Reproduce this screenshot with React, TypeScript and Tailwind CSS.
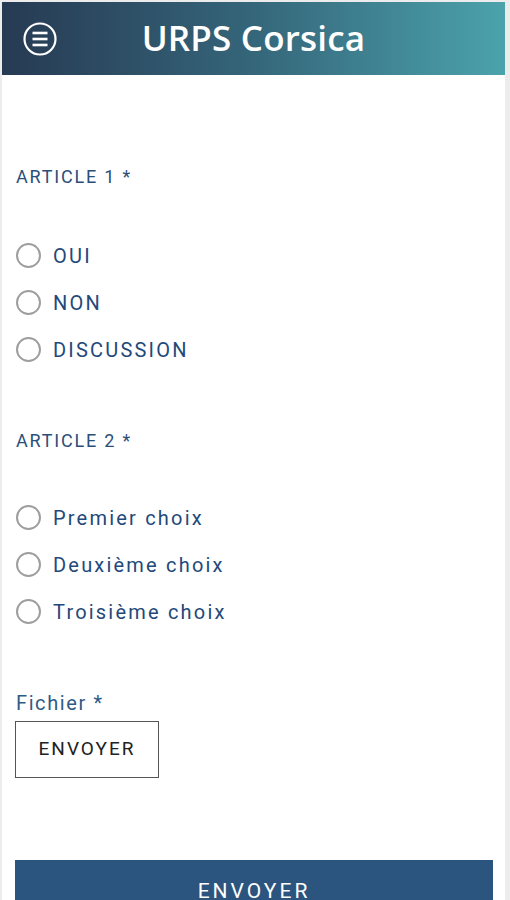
import React, { useState } from 'react';

const articles = [
  { title: 'ARTICLE 1 *', options: ['OUI', 'NON', 'DISCUSSION'], top: 'mt-[89px]', gap: 'mt-[44px]' },
  { title: 'ARTICLE 2 *', options: ['Premier choix', 'Deuxième choix', 'Troisième choix'], top: 'mt-[55px]', gap: 'mt-[42px]' },
];

const MenuIcon = () => (
  <svg width="34" height="34" viewBox="0 0 34 34" fill="none">
    <circle cx="17" cy="17" r="15.5" stroke="white" strokeWidth="2.2" />
    <line x1="9.5" y1="11" x2="24.5" y2="11" stroke="white" strokeWidth="2.6" />
    <line x1="9.5" y1="17" x2="24.5" y2="17" stroke="white" strokeWidth="2.6" />
    <line x1="9.5" y1="23" x2="24.5" y2="23" stroke="white" strokeWidth="2.6" />
  </svg>
);

const Radio = ({ label, checked, onClick }: { label: string; checked: boolean; onClick: () => void }) => (
  <button type="button" onClick={onClick} className="h-[47px] flex items-center text-left">
    <span className="w-[25px] h-[25px] ml-[3px] rounded-full border-2 border-[#9e9e9e] flex items-center justify-center">
      {checked && <span className="w-[13px] h-[13px] rounded-full bg-[#2b557f]" />}
    </span>
    <span className="ml-[12px] text-[20px] tracking-[2.2px] text-[#23497a]">{label}</span>
  </button>
);

export default function App() {
  const [answers, setAnswers] = useState<Record<number, string>>({});

  return (
    <div className="min-h-[900px] bg-[#ececec] pl-[2px] pr-[5px] pt-[2px] overflow-hidden" style={{ fontFamily: 'Roboto, "Open Sans", sans-serif' }}>
      <div className="bg-white min-h-[898px] flex flex-col">
        {/* Header */}
        <div className="h-[73px] bg-gradient-to-r from-[#263a53] via-[#35667a] to-[#4ba3ac] flex items-center relative">
          <div className="ml-[21px]">
            <MenuIcon />
          </div>
          <div
            className="absolute left-0 right-0 text-center text-white text-[35px] font-semibold tracking-[0.2px]"
            style={{ fontFamily: '"Open Sans", sans-serif' }}
          >
            URPS Corsica
          </div>
        </div>

        <div className="pl-[11px] pr-[12px] flex flex-col">
          {articles.map((a, i) => (
            <div key={a.title} className={`flex flex-col ${a.top}`}>
              <div className="h-[24px] flex items-center pl-[3px] text-[18px] tracking-[1.8px] text-[#2b4f7a]">{a.title}</div>
              <div className={`${a.gap} flex flex-col`}>
                {a.options.map((o) => (
                  <Radio
                    key={o}
                    label={o}
                    checked={answers[i] === o}
                    onClick={() => setAnswers({ ...answers, [i]: o })}
                  />
                ))}
              </div>
            </div>
          ))}

          <div className="mt-[56px] h-[24px] flex items-center pl-[3px] text-[20px] tracking-[1.6px] text-[#2f5a87]">Fichier *</div>
          <button
            type="button"
            className="mt-[6px] ml-[2px] w-[144px] h-[57px] border border-[#555] text-[19px] tracking-[2px] text-[#222] bg-white"
          >
            ENVOYER
          </button>

          <button
            type="button"
            className="mt-[82px] ml-[2px] w-[478px] h-[60px] bg-[#2b557f] text-white text-[21px] tracking-[3px] flex justify-center pt-[16px]"
          >
            ENVOYER
          </button>
        </div>
      </div>
    </div>
  );
}
